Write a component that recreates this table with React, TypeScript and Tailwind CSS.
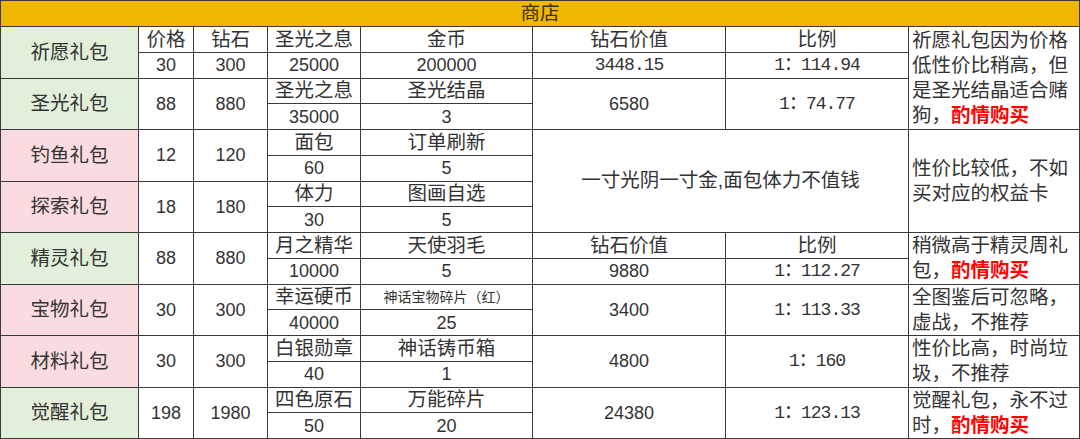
import React from "react";

const G = "bg-[#e2efda]";
const P = "bg-[#fadbe0]";

function C({ className = "", children }: { className?: string; children?: React.ReactNode }) {
  return (
    <div className={`flex items-center justify-center overflow-hidden whitespace-nowrap leading-none ${className}`}>
      {children}
    </div>
  );
}

const mono = "font-['Liberation_Mono','Noto_Sans_CJK_SC',monospace] text-[18px] tracking-[-1px]";
const cjk = "text-[19.5px]";
const num = "text-[18px]";

function Red() {
  return <span className="font-bold text-[#ff0000]">酌情购买</span>;
}

function Note({ className = "", lines }: { className?: string; lines: React.ReactNode[] }) {
  return (
    <div className={`flex flex-col justify-center bg-white pl-[3px] text-[19.5px] leading-[25px] whitespace-nowrap overflow-hidden ${className}`}>
      {lines.map((l, i) => (
        <div key={i}>{l}</div>
      ))}
    </div>
  );
}

export default function App() {
  return (
    <div className="w-[1080px] h-[439px] font-['Liberation_Sans','Noto_Sans_CJK_SC',sans-serif] text-[#333333]">
      <div className="grid h-[439px] w-[1080px] grid-cols-[137px_54px_73px_92px_171px_192px_182px_170px] grid-rows-[25px_repeat(16,minmax(0,1fr))] gap-px bg-[#3a3a3a] p-px">
        {/* header */}
        <C className={`col-span-8 bg-[#f0b800] ${cjk} text-[#3a3000]`}>商店</C>

        {/* pair 1: rows 2-3 */}
        <C className={`col-start-1 row-start-2 row-span-2 ${G} ${cjk}`}>祈愿礼包</C>
        <C className={`col-start-2 row-start-2 bg-white ${cjk}`}>价格</C>
        <C className={`col-start-3 row-start-2 bg-white ${cjk}`}>钻石</C>
        <C className={`col-start-4 row-start-2 bg-white ${cjk}`}>圣光之息</C>
        <C className={`col-start-5 row-start-2 bg-white ${cjk}`}>金币</C>
        <C className={`col-start-6 row-start-2 bg-white ${cjk}`}>钻石价值</C>
        <C className={`col-start-7 row-start-2 bg-white ${cjk}`}>比例</C>
        <C className={`col-start-2 row-start-3 bg-white ${num}`}>30</C>
        <C className={`col-start-3 row-start-3 bg-white ${num}`}>300</C>
        <C className={`col-start-4 row-start-3 bg-white ${num}`}>25000</C>
        <C className={`col-start-5 row-start-3 bg-white ${num}`}>200000</C>
        <C className={`col-start-6 row-start-3 bg-white ${mono}`}>3448.15</C>
        <C className={`col-start-7 row-start-3 bg-white ${mono}`}>1：114.94</C>
        <Note
          className="col-start-8 row-start-2 row-span-4"
          lines={["祈愿礼包因为价格", "低性价比稍高，但", "是圣光结晶适合赌", <>狗，<Red /></>]}
        />

        {/* pair 2: rows 4-5 */}
        <C className={`col-start-1 row-start-4 row-span-2 ${G} ${cjk}`}>圣光礼包</C>
        <C className={`col-start-2 row-start-4 row-span-2 bg-white ${num}`}>88</C>
        <C className={`col-start-3 row-start-4 row-span-2 bg-white ${num}`}>880</C>
        <C className={`col-start-4 row-start-4 bg-white ${cjk}`}>圣光之息</C>
        <C className={`col-start-4 row-start-5 bg-white ${num}`}>35000</C>
        <C className={`col-start-5 row-start-4 bg-white ${cjk}`}>圣光结晶</C>
        <C className={`col-start-5 row-start-5 bg-white ${num}`}>3</C>
        <C className={`col-start-6 row-start-4 row-span-2 bg-white ${num}`}>6580</C>
        <C className={`col-start-7 row-start-4 row-span-2 bg-white ${mono}`}>1：74.77</C>

        {/* pair 3: rows 6-7 */}
        <C className={`col-start-1 row-start-6 row-span-2 ${P} ${cjk}`}>钓鱼礼包</C>
        <C className={`col-start-2 row-start-6 row-span-2 bg-white ${num}`}>12</C>
        <C className={`col-start-3 row-start-6 row-span-2 bg-white ${num}`}>120</C>
        <C className={`col-start-4 row-start-6 bg-white ${cjk}`}>面包</C>
        <C className={`col-start-4 row-start-7 bg-white ${num}`}>60</C>
        <C className={`col-start-5 row-start-6 bg-white ${cjk}`}>订单刷新</C>
        <C className={`col-start-5 row-start-7 bg-white ${num}`}>5</C>
        <C className={`col-start-6 col-span-2 row-start-6 row-span-4 bg-white ${cjk}`}>一寸光阴一寸金,面包体力不值钱</C>
        <Note className="col-start-8 row-start-6 row-span-4" lines={["性价比较低，不如", "买对应的权益卡"]} />

        {/* pair 4: rows 8-9 */}
        <C className={`col-start-1 row-start-8 row-span-2 ${P} ${cjk}`}>探索礼包</C>
        <C className={`col-start-2 row-start-8 row-span-2 bg-white ${num}`}>18</C>
        <C className={`col-start-3 row-start-8 row-span-2 bg-white ${num}`}>180</C>
        <C className={`col-start-4 row-start-8 bg-white ${cjk}`}>体力</C>
        <C className={`col-start-4 row-start-9 bg-white ${num}`}>30</C>
        <C className={`col-start-5 row-start-8 bg-white ${cjk}`}>图画自选</C>
        <C className={`col-start-5 row-start-9 bg-white ${num}`}>5</C>

        {/* pair 5: rows 10-11 */}
        <C className={`col-start-1 row-start-10 row-span-2 ${G} ${cjk}`}>精灵礼包</C>
        <C className={`col-start-2 row-start-10 row-span-2 bg-white ${num}`}>88</C>
        <C className={`col-start-3 row-start-10 row-span-2 bg-white ${num}`}>880</C>
        <C className={`col-start-4 row-start-10 bg-white ${cjk}`}>月之精华</C>
        <C className={`col-start-4 row-start-11 bg-white ${num}`}>10000</C>
        <C className={`col-start-5 row-start-10 bg-white ${cjk}`}>天使羽毛</C>
        <C className={`col-start-5 row-start-11 bg-white ${num}`}>5</C>
        <C className={`col-start-6 row-start-10 bg-white ${cjk}`}>钻石价值</C>
        <C className={`col-start-6 row-start-11 bg-white ${num}`}>9880</C>
        <C className={`col-start-7 row-start-10 bg-white ${cjk}`}>比例</C>
        <C className={`col-start-7 row-start-11 bg-white ${mono}`}>1：112.27</C>
        <Note className="col-start-8 row-start-10 row-span-2" lines={["稍微高于精灵周礼", <>包，<Red /></>]} />

        {/* pair 6: rows 12-13 */}
        <C className={`col-start-1 row-start-12 row-span-2 ${P} ${cjk}`}>宝物礼包</C>
        <C className={`col-start-2 row-start-12 row-span-2 bg-white ${num}`}>30</C>
        <C className={`col-start-3 row-start-12 row-span-2 bg-white ${num}`}>300</C>
        <C className={`col-start-4 row-start-12 bg-white ${cjk}`}>幸运硬币</C>
        <C className={`col-start-4 row-start-13 bg-white ${num}`}>40000</C>
        <C className={`col-start-5 row-start-12 bg-white text-[14px]`}>神话宝物碎片（红）</C>
        <C className={`col-start-5 row-start-13 bg-white ${num}`}>25</C>
        <C className={`col-start-6 row-start-12 row-span-2 bg-white ${num}`}>3400</C>
        <C className={`col-start-7 row-start-12 row-span-2 bg-white ${mono}`}>1：113.33</C>
        <Note className="col-start-8 row-start-12 row-span-2" lines={["全图鉴后可忽略，", "虚战，不推荐"]} />

        {/* pair 7: rows 14-15 */}
        <C className={`col-start-1 row-start-14 row-span-2 ${P} ${cjk}`}>材料礼包</C>
        <C className={`col-start-2 row-start-14 row-span-2 bg-white ${num}`}>30</C>
        <C className={`col-start-3 row-start-14 row-span-2 bg-white ${num}`}>300</C>
        <C className={`col-start-4 row-start-14 bg-white ${cjk}`}>白银勋章</C>
        <C className={`col-start-4 row-start-15 bg-white ${num}`}>40</C>
        <C className={`col-start-5 row-start-14 bg-white ${cjk}`}>神话铸币箱</C>
        <C className={`col-start-5 row-start-15 bg-white ${num}`}>1</C>
        <C className={`col-start-6 row-start-14 row-span-2 bg-white ${num}`}>4800</C>
        <C className={`col-start-7 row-start-14 row-span-2 bg-white ${mono}`}>1：160</C>
        <Note className="col-start-8 row-start-14 row-span-2" lines={["性价比高，时尚垃", "圾，不推荐"]} />

        {/* pair 8: rows 16-17 */}
        <C className={`col-start-1 row-start-16 row-span-2 ${G} ${cjk}`}>觉醒礼包</C>
        <C className={`col-start-2 row-start-16 row-span-2 bg-white ${num}`}>198</C>
        <C className={`col-start-3 row-start-16 row-span-2 bg-white ${num}`}>1980</C>
        <C className={`col-start-4 row-start-16 bg-white ${cjk}`}>四色原石</C>
        <C className={`col-start-4 row-start-17 bg-white ${num}`}>50</C>
        <C className={`col-start-5 row-start-16 bg-white ${cjk}`}>万能碎片</C>
        <C className={`col-start-5 row-start-17 bg-white ${num}`}>20</C>
        <C className={`col-start-6 row-start-16 row-span-2 bg-white ${num}`}>24380</C>
        <C className={`col-start-7 row-start-16 row-span-2 bg-white ${mono}`}>1：123.13</C>
        <Note className="col-start-8 row-start-16 row-span-2" lines={["觉醒礼包，永不过", <>时，<Red /></>]} />
      </div>
    </div>
  );
}
